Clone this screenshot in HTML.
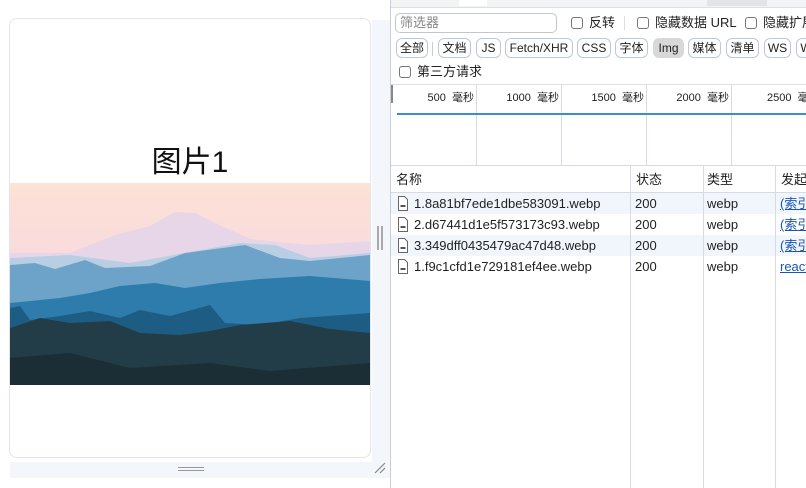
<!DOCTYPE html>
<html><head><meta charset="utf-8"><style>
*{box-sizing:border-box;margin:0;padding:0}
body{width:806px;height:488px;overflow:hidden;background:#fff;font-family:"Liberation Sans","Noto Sans CJK SC",sans-serif;position:relative;font-size:12px;color:#222}
.abs{position:absolute;white-space:nowrap}
.card{left:9px;top:18px;width:362px;height:440px;border:1px solid #e4e4e4;border-radius:8px;background:#fff}
.btn{position:absolute;top:38px;height:20px;border:1px solid #bcc8dc;border-radius:6px;font-size:12px;line-height:18px;text-align:center;background:#fff;color:#222;white-space:nowrap;overflow:hidden}
.cb{position:absolute;width:12px;height:12px;border:1px solid #777;border-radius:3px;background:#fff}
.row{position:absolute;left:391px;width:415px;height:21px;font-size:13px;line-height:21px;white-space:nowrap}
.vl{position:absolute;width:1px;background:#d6dbe3}
</style></head><body>
<div class="abs" style="left:372px;top:20px;width:18px;height:458px;background:#f3f7fb"></div>
<div class="abs" style="left:10px;top:462px;width:380px;height:16px;background:#f3f7fb"></div>
<div class="abs" style="left:178px;top:467px;width:26px;height:1px;background:#999"></div>
<div class="abs" style="left:178px;top:470px;width:26px;height:1px;background:#999"></div>
<svg class="abs" style="left:373px;top:461px" width="14" height="14"><path d="M2 12L12 2M7 12L12 7" stroke="#888" stroke-width="1.2"/></svg>
<div class="abs" style="left:377px;top:226px;width:2px;height:24px;background:#aaa"></div>
<div class="abs" style="left:381px;top:226px;width:2px;height:24px;background:#aaa"></div>
<div class="abs card"></div>
<div class="abs" style="left:10px;top:143px;width:360px;text-align:center;font-size:30px;line-height:40px;color:#111">图片1</div>
<svg class="abs" style="left:10px;top:183px" width="360" height="202" viewBox="0 0 360 202">
<defs><linearGradient id="sky" x1="0" y1="0" x2="0" y2="1"><stop offset="0" stop-color="#fde2d6"/><stop offset="0.5" stop-color="#f7d8de"/><stop offset="1" stop-color="#e8d5e6"/></linearGradient></defs>
<rect width="360" height="202" fill="url(#sky)"/>
<path d="M60 70L105 52L140 43L165 29L185 30L205 40L240 56L300 62L360 58L360 90L0 90L0 70Z" fill="#e6d6e8"/>
<path d="M0 75L60 72L120 80L175 70L230 60L265 62L300 75L360 70L360 202L0 202Z" fill="#b8cfe3"/>
<path d="M0 82L25 80L45 86L75 77L95 85L140 83L175 70L235 62L270 75L300 78L360 72L360 202L0 202Z" fill="#6ea3c9"/>
<path d="M0 120L50 115L80 110L110 103L145 100L175 105L210 100L250 96L300 93L360 98L360 202L0 202Z" fill="#2e7cac"/>
<path d="M0 125L10 123L20 137L50 133L80 128L110 135L130 127L160 133L200 122L215 140L250 142L290 135L360 130L360 202L0 202Z" fill="#1e5d83"/>
<path d="M0 145L30 135L60 140L100 138L130 150L170 152L200 148L230 142L280 138L320 146L360 150L360 202L0 202Z" fill="#223d48"/>
<path d="M0 175L60 170L120 185L200 180L260 188L360 180L360 202L0 202Z" fill="#1b2e36"/>
</svg>
<div class="abs" style="left:390px;top:0;width:1px;height:488px;background:#c9ced6"></div>
<div class="abs" style="left:391px;top:0;width:415px;height:8px;background:#f1f3f5;border-bottom:1px solid #dde1e6"></div>
<div class="abs" style="left:459px;top:0;width:28px;height:6px;background:#fff"></div>
<div class="abs" style="left:707px;top:0;width:60px;height:6px;background:#e2e4e7"></div>
<div class="abs" style="left:395px;top:13px;width:162px;height:20px;border:1px solid #c3c7cc;border-radius:5px;padding-left:4px;line-height:18px;color:#888;font-size:13px">筛选器</div>
<div class="cb" style="left:571px;top:17px"></div><div class="abs" style="left:589px;top:14px;font-size:13px;line-height:18px">反转</div>
<div class="abs" style="left:624px;top:16px;width:1px;height:14px;background:#ddd"></div>
<div class="cb" style="left:637px;top:17px"></div><div class="abs" style="left:655px;top:14px;line-height:18px;font-size:13px">隐藏数据 URL</div>
<div class="cb" style="left:745px;top:17px"></div><div class="abs" style="left:763px;top:14px;line-height:18px;font-size:13px">隐藏扩展</div>
<div class="btn" style="left:396px;width:32px">全部</div>
<div class="abs" style="left:432px;top:42px;width:1px;height:14px;background:#ccc"></div>
<div class="btn" style="left:438px;width:33px">文档</div>
<div class="btn" style="left:476px;width:25px">JS</div>
<div class="btn" style="left:505px;width:68px">Fetch/XHR</div>
<div class="btn" style="left:577px;width:34px">CSS</div>
<div class="btn" style="left:615px;width:33px">字体</div>
<div class="btn" style="left:653px;width:31px;background:#d8d8d8;border-color:#d8d8d8">Img</div>
<div class="btn" style="left:688px;width:33px">媒体</div>
<div class="btn" style="left:726px;width:33px">清单</div>
<div class="btn" style="left:764px;width:27px">WS</div>
<div class="btn" style="left:796px;width:20px">W</div>
<div class="cb" style="left:399px;top:66px"></div><div class="abs" style="left:417px;top:63px;line-height:18px;font-size:13px">第三方请求</div>
<div class="abs" style="left:391px;top:84px;width:415px;height:1px;background:#dde1e6"></div>
<div class="abs" style="left:391px;top:85px;width:2px;height:18px;background:#888"></div>
<div class="vl" style="left:476px;top:85px;height:80px"></div>
<div class="vl" style="left:561px;top:85px;height:80px"></div>
<div class="vl" style="left:646px;top:85px;height:80px"></div>
<div class="vl" style="left:731px;top:85px;height:80px"></div>
<div class="abs" style="left:391px;top:89px;width:83px;text-align:right;font-size:11px">500&nbsp; 毫秒</div>
<div class="abs" style="left:476px;top:89px;width:83px;text-align:right;font-size:11px">1000&nbsp; 毫秒</div>
<div class="abs" style="left:561px;top:89px;width:83px;text-align:right;font-size:11px">1500&nbsp; 毫秒</div>
<div class="abs" style="left:646px;top:89px;width:83px;text-align:right;font-size:11px">2000&nbsp; 毫秒</div>
<div class="abs" style="left:767px;top:89px;font-size:11px">2500&nbsp; 毫秒</div>
<div class="abs" style="left:397px;top:113px;width:409px;height:2px;background:#3b8ec8"></div>
<div class="abs" style="left:391px;top:165px;width:415px;height:1px;background:#d6dbe3"></div>
<div class="row" style="top:166px;height:27px;line-height:27px;background:#fff;border-bottom:1px solid #d6dbe3"><span class="abs" style="left:5px">名称</span><span class="abs" style="left:245px">状态</span><span class="abs" style="left:316px">类型</span><span class="abs" style="left:390px">发起程</span></div>
<div class="row" style="top:193px;background:#f1f6fd"></div>
<div class="row" style="top:235px;background:#f1f6fd"></div>
<div class="vl" style="left:630px;top:166px;height:322px"></div>
<div class="vl" style="left:703px;top:166px;height:322px"></div>
<div class="vl" style="left:775px;top:166px;height:322px"></div>
<div class="row" style="top:193px"><span class="abs" style="left:23px">1.8a81bf7ede1dbe583091.webp</span><span class="abs" style="left:244px">200</span><span class="abs" style="left:316px">webp</span><span class="abs" style="left:389px;color:#1a55b4;text-decoration:underline">(索引</span></div>
<div class="row" style="top:214px"><span class="abs" style="left:23px">2.d67441d1e5f573173c93.webp</span><span class="abs" style="left:244px">200</span><span class="abs" style="left:316px">webp</span><span class="abs" style="left:389px;color:#1a55b4;text-decoration:underline">(索引</span></div>
<div class="row" style="top:235px"><span class="abs" style="left:23px">3.349dff0435479ac47d48.webp</span><span class="abs" style="left:244px">200</span><span class="abs" style="left:316px">webp</span><span class="abs" style="left:389px;color:#1a55b4;text-decoration:underline">(索引</span></div>
<div class="row" style="top:256px"><span class="abs" style="left:23px">1.f9c1cfd1e729181ef4ee.webp</span><span class="abs" style="left:244px">200</span><span class="abs" style="left:316px">webp</span><span class="abs" style="left:389px;color:#1a55b4;text-decoration:underline">react</span></div>
<svg class="abs" style="left:397px;top:196px" width="12" height="80">
<g fill="#fff" stroke="#666" stroke-width="1"><path d="M1.5 .5H7.5L10.5 3.5V14.5H1.5Z"/><path d="M1.5 21.5H7.5L10.5 24.5V35.5H1.5Z"/><path d="M1.5 42.5H7.5L10.5 45.5V56.5H1.5Z"/><path d="M1.5 63.5H7.5L10.5 66.5V77.5H1.5Z"/></g>
<g fill="#555"><rect x="3.5" y="9" width="5" height="2"/><rect x="3.5" y="30" width="5" height="2"/><rect x="3.5" y="51" width="5" height="2"/><rect x="3.5" y="72" width="5" height="2"/></g>
</svg>
</body></html>
